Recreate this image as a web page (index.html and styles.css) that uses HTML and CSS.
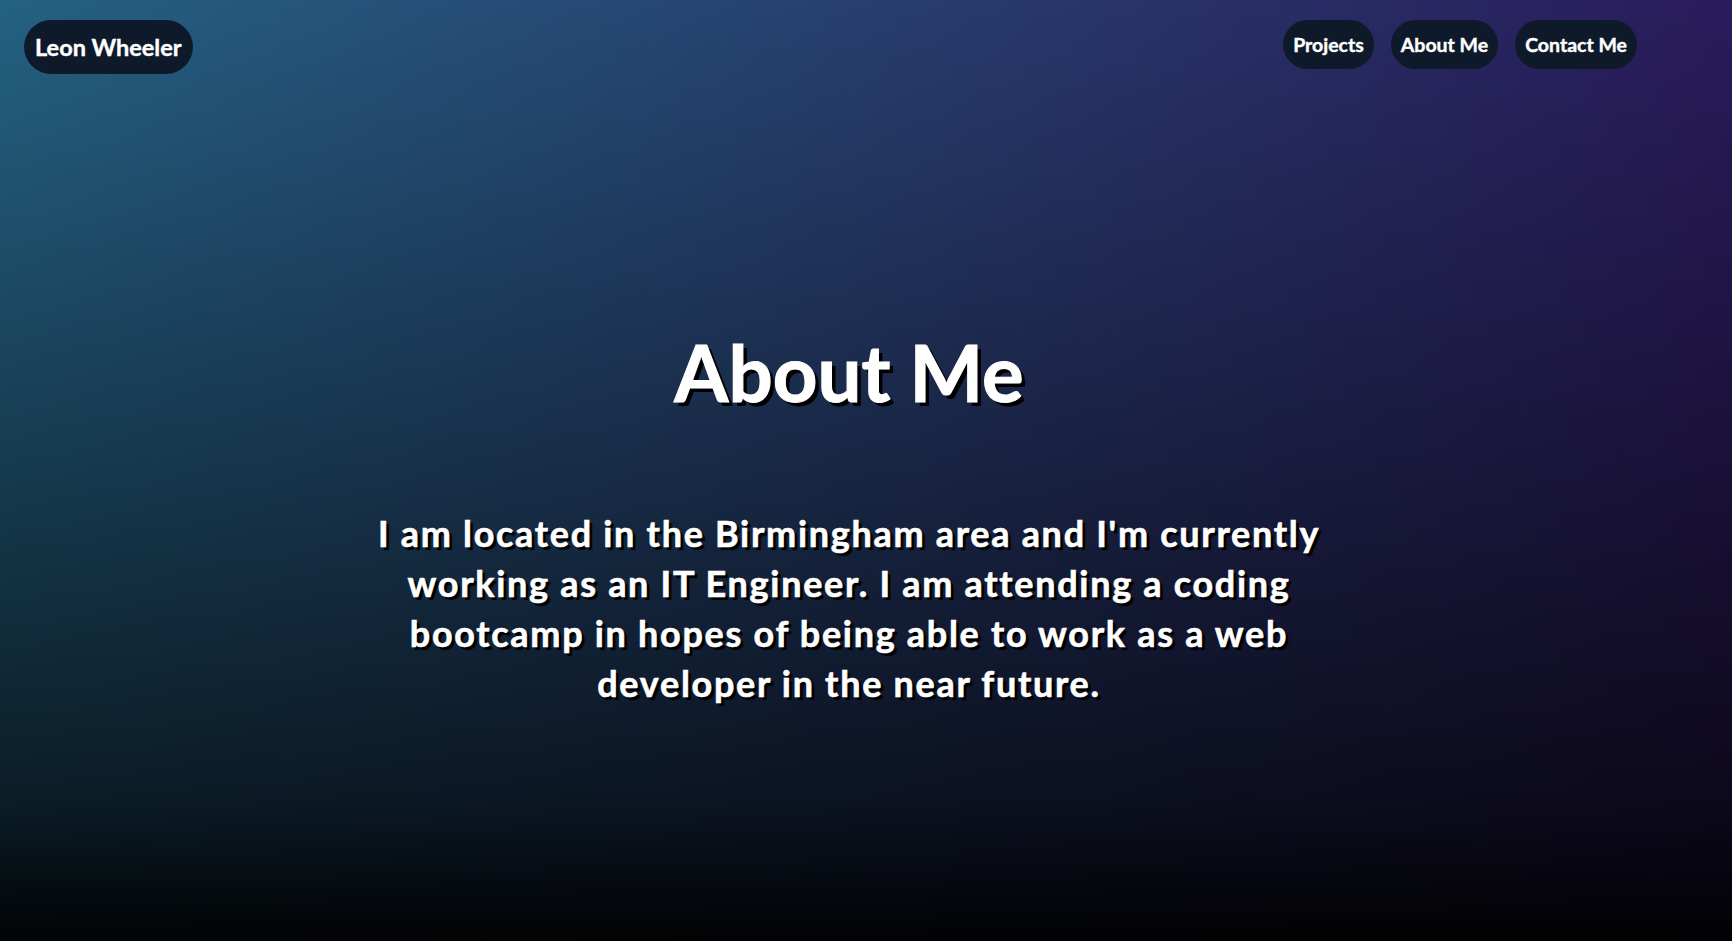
FILE: index.html
```html
<!DOCTYPE html>
<html lang="en">
<head>
<meta charset="utf-8">
<title>Leon Wheeler - About Me</title>
<link rel="stylesheet" href="styles.css">
</head>
<body>
<header class="site-header">
  <a class="pill logo" href="#">Leon Wheeler</a>
  <nav class="nav">
    <a class="pill nav-link" href="#">Projects</a>
    <a class="pill nav-link" href="#">About Me</a>
    <a class="pill nav-link" href="#">Contact Me</a>
  </nav>
</header>
<main class="about">
  <h1 class="about-title">About Me</h1>
  <p class="about-text">I am located in the Birmingham area and I'm currently working as an IT Engineer. I am attending a coding bootcamp in hopes of being able to work as a web developer in the near future.</p>
</main>
</body>
</html>
```
FILE: styles.css
```css
* { box-sizing: border-box; }
html, body { height: 100%; }
body {
  margin: 0;
  min-height: 100vh;
  font-family: Lato, "Open Sans", sans-serif;
  font-weight: 700;
  color: #fff;
  background:
    linear-gradient(180deg, rgba(0,0,0,0) 0%, rgba(0,0,0,0.08) 11%, rgba(0,0,0,0.38) 48%, rgba(0,0,0,0.7) 85%, rgba(0,0,0,0.97) 100%),
    linear-gradient(90deg, #246182 0%, #2a1b5c 100%);
  overflow: hidden;
}
.site-header {
  display: flex;
  justify-content: space-between;
  align-items: flex-start;
  padding: 20px 95px 0 24px;
}
.pill {
  display: inline-flex;
  align-items: center;
  justify-content: center;
  background: #0e1a2a;
  color: #fff;
  text-decoration: none;
  border-radius: 999px;
  -webkit-text-stroke: 0.4px #fff;
}
.logo {
  height: 54px;
  padding: 0 11px;
  font-size: 23.5px;
}
.nav { display: flex; gap: 17px; }
.nav-link {
  height: 49px;
  padding: 0 10px;
  font-size: 19.5px;
}
.about {
  display: flex;
  flex-direction: column;
  align-items: center;
  padding: 252px 34px 0 0;
  text-align: center;
}
.about-title {
  margin: 0;
  font-size: 78px;
  line-height: 1.2;
  -webkit-text-stroke: 1px #fff;
  text-shadow: 4px 4px 0 #000;
}
.about-text {
  margin: 88px 0 0;
  max-width: 1000px;
  font-size: 36px;
  line-height: 50px;
  letter-spacing: 1.7px;
  -webkit-text-stroke: 0.6px #fff;
  text-shadow: 3px 3px 1px #000;
}
```
